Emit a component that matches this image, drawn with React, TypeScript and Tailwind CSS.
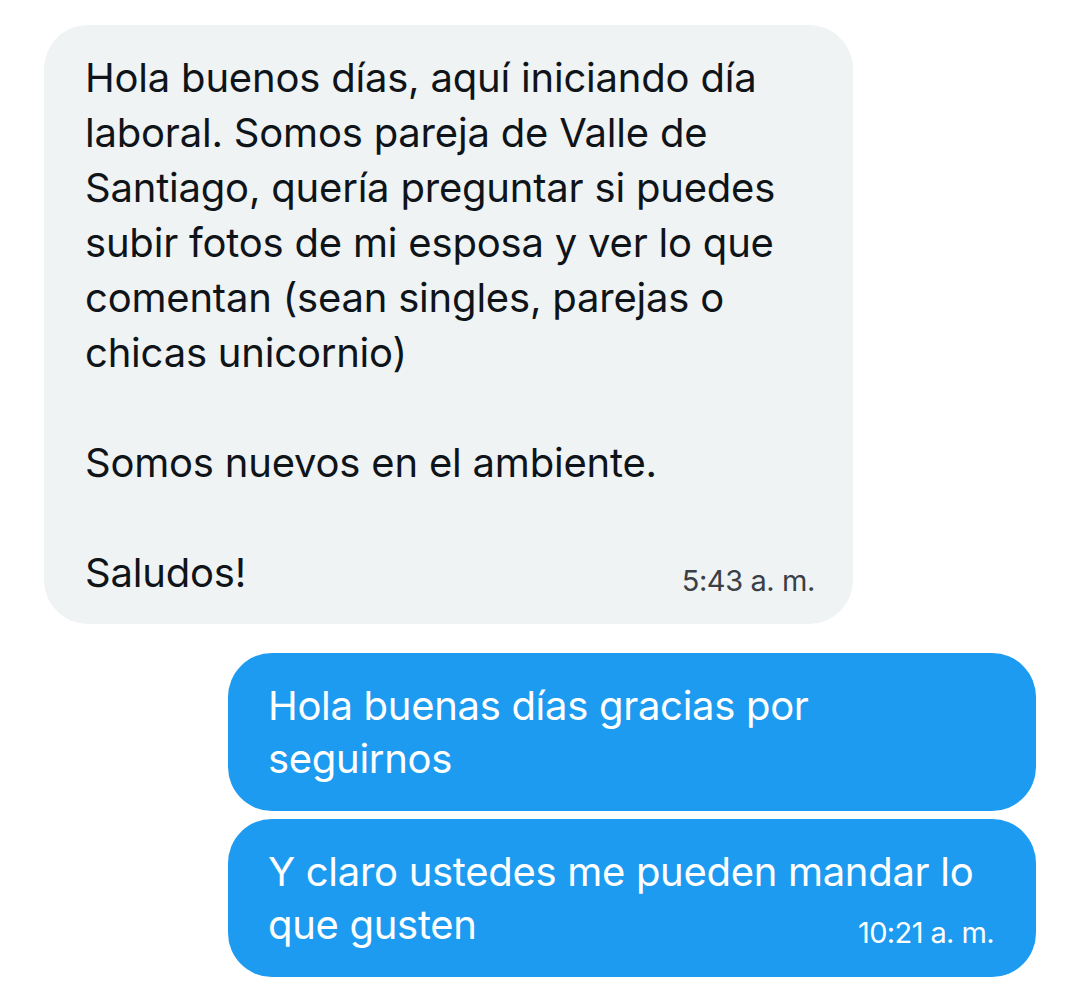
import React from "react";

const font = { fontFamily: "Inter, 'Noto Sans', sans-serif" };

export default function App() {
  return (
    <div
      className="min-h-screen bg-white pt-[25px] px-[44px] flex flex-col"
      style={font}
    >
      <div className="self-start w-[809px] rounded-[44px] bg-[#eff3f4] pt-[25px] pb-[24px] pl-[41px] pr-[38px] text-[#0f1419] text-[40px] leading-[55px] tracking-[-0.2px] whitespace-nowrap">
        <div>Hola buenos días, aquí iniciando día</div>
        <div>laboral. Somos pareja de Valle de</div>
        <div>Santiago, quería preguntar si puedes</div>
        <div>subir fotos de mi esposa y ver lo que</div>
        <div>comentan (sean singles, parejas o</div>
        <div>chicas unicornio)</div>
        <div className="h-[55px]" />
        <div>Somos nuevos en el ambiente.</div>
        <div className="h-[55px]" />
        <div className="flex justify-between items-end">
          <span>Saludos!</span>
          <span className="text-[29px] leading-[38px] tracking-[-0.4px] text-[#3a4046]">5:43 a. m.</span>
        </div>
      </div>

      <div className="self-end w-[808px] mt-[29px] rounded-[44px] bg-[#1d9bf0] pt-[26px] pb-[26px] pl-[40px] pr-[42px] text-white text-[40px] leading-[53px] tracking-[-0.3px] whitespace-nowrap">
        <div>Hola buenas días gracias por</div>
        <div>seguirnos</div>
      </div>

      <div className="self-end w-[808px] mt-[8px] rounded-[44px] bg-[#1d9bf0] pt-[26px] pb-[26px] pl-[40px] pr-[42px] text-white text-[40px] leading-[53px] tracking-[-0.3px] whitespace-nowrap">
        <div>Y claro ustedes me pueden mandar lo</div>
        <div className="flex justify-between items-end">
          <span>que gusten</span>
          <span className="text-[29px] leading-[37px] tracking-[-0.6px]">10:21 a. m.</span>
        </div>
      </div>
    </div>
  );
}
